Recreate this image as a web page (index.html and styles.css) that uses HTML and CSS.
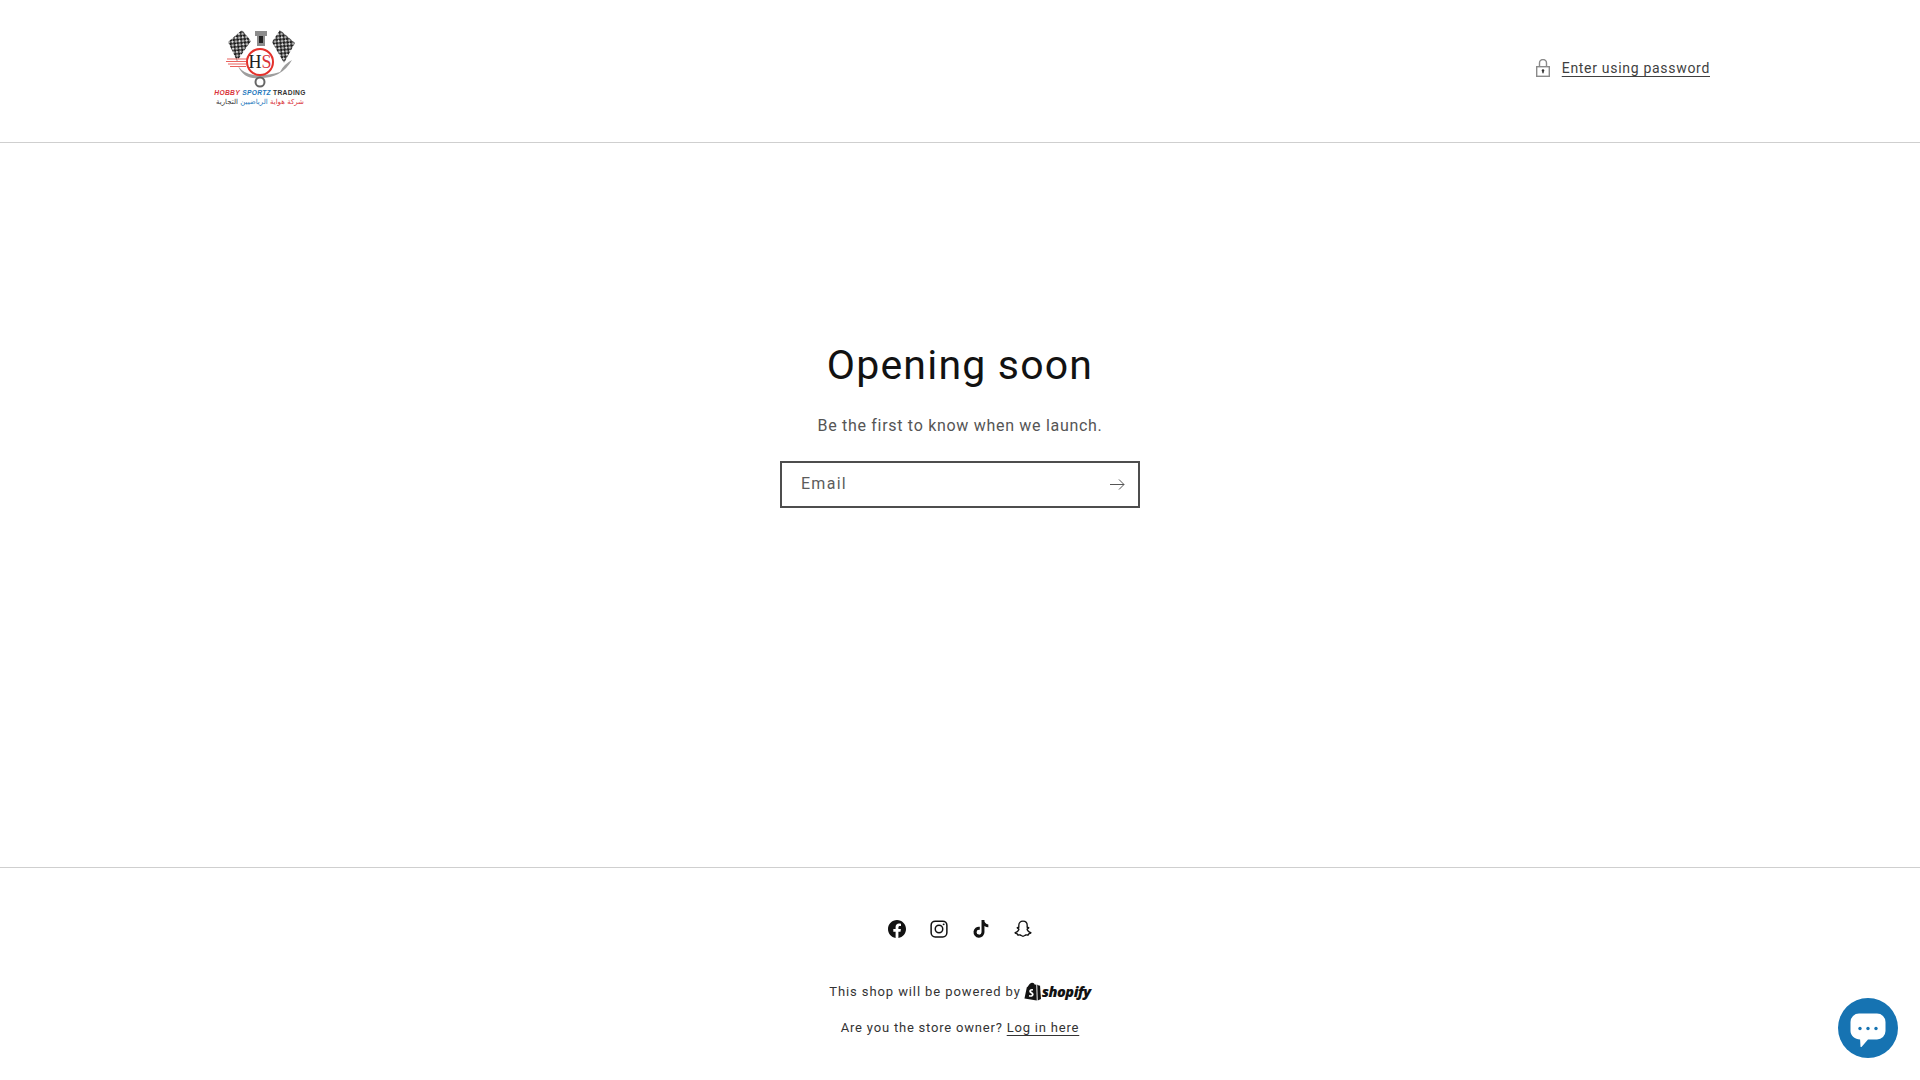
FILE: index.html
```html
<!DOCTYPE html>
<html>
	<head>
		<meta charset="utf-8" />
		<title>Hobby Sportz Trading</title>
		<link rel="stylesheet" href="styles.css">
	</head>
	<body>
		<header class="header">
			<a href="#" class="logo">
				<svg class="logoMark" viewBox="0 0 100 60" width="100" height="60">
					<defs>
						<pattern id="check" width="5" height="5" patternUnits="userSpaceOnUse" patternTransform="rotate(40)">
							<rect width="5" height="5" fill="#1c1c1c"/>
							<rect width="2.200" height="2.200" fill="#ddd"/>
							<rect x="2.500" y="2.500" width="2.200" height="2.200" fill="#ddd"/>
						</pattern>
					</defs>
					<path d="M32 2 L41 13 L27 33 L18 14 Z" fill="url(#check)"/>
					<path d="M70 2 L85 15 L74 35 L62 14 Z" fill="url(#check)"/>
					<path d="M45 3h12v5h-2v10h-8V8h-2z" fill="#8c8c8c"/>
					<rect x="49" y="8" width="4" height="7" fill="#222"/>
					<path d="M28 38 Q34 52 50 50 Q72 50 82 32 Q74 36 70 44 Q56 48 44 47 Q34 46 28 38 Z" fill="#9e9e9e"/>
					<circle cx="50" cy="54" r="4.500" fill="none" stroke="#666" stroke-width="2"/>
					<path d="M17 31h20M16 33.500h20M18 36h18M20 38.500h16" stroke="#e9635e" stroke-width="1"/>
					<circle cx="50" cy="34" r="13" fill="#fff" stroke="#e4312b" stroke-width="2"/>
					<text x="50" y="40" class="logoHs">H<tspan class="logoS">S</tspan></text>
				</svg>
				<span class="logoLine"><b class="logoRed">HOBBY</b> <b class="logoBlue">SPORTZ</b> <b class="logoDark">TRADING</b></span>
				<span class="logoArabic" dir="rtl"><span class="logoRed">شركة هواية</span> <span class="logoBlue">الرياضيين</span> التجارية</span>
			</a>
			<a href="#" class="enter">
				<svg class="lock" viewBox="0 0 14 18" width="14" height="18" fill="none" stroke="#8a8a8a" stroke-width="1.400">
					<rect x="0.700" y="7.700" width="12.600" height="9.600"/>
					<path d="M3.500 7.500V4a3.500 3.500 0 0 1 7 0v3.500"/>
					<circle cx="7" cy="11.500" r="1.300" fill="#333" stroke="none"/>
					<path d="M7 12v2.200" stroke="#333"/>
				</svg>
				<span class="link">Enter using password</span>
			</a>
		</header>
		<main class="main">
			<h1>Opening soon</h1>
			<p class="sub">Be the first to know when we launch.</p>
			<form class="field">
				<span class="placeholder">Email</span>
				<svg viewBox="0 0 15 11" width="15" height="11" fill="none" stroke="#555" stroke-width="1">
					<path d="M0 5.500h14M9 .5l5 5-5 5"/>
				</svg>
			</form>
		</main>
		<footer class="footer">
			<ul class="social">
				<li>
					<svg viewBox="0 0 24 24" width="18" height="18" fill="#121212">
						<path d="M24 12.070C24 5.400 18.630 0 12 0S0 5.400 0 12.070c0 6.030 4.390 11.020 10.130 11.930v-8.440H7.080v-3.490h3.050V9.410c0-3.020 1.790-4.690 4.530-4.690 1.310 0 2.680.24 2.680.24v2.970h-1.510c-1.490 0-1.960.93-1.960 1.880v2.260h3.330l-.53 3.490h-2.800V24C19.610 23.090 24 18.100 24 12.070z"/>
					</svg>
				</li>
				<li>
					<svg viewBox="0 0 24 24" width="18" height="18" fill="none" stroke="#121212" stroke-width="2">
						<rect x="1.500" y="1.500" width="21" height="21" rx="5.500"/>
						<circle cx="12" cy="12" r="5"/>
						<circle cx="18.200" cy="5.800" r="1.300" fill="#121212" stroke="none"/>
					</svg>
				</li>
				<li>
					<svg viewBox="0 0 24 24" width="18" height="18" fill="#121212">
						<path d="M16.600 0h-3.900v16.300a3.300 3.300 0 1 1-3.300-3.400c.3 0 .7 0 1 .1V9a7.300 7.300 0 1 0 6.200 7.300V8.100a9 9 0 0 0 5.200 1.700V5.900A5.200 5.200 0 0 1 16.600 0z"/>
					</svg>
				</li>
				<li>
					<svg viewBox="0 0 24 24" width="18" height="18" fill="none" stroke="#121212" stroke-width="1.800" stroke-linejoin="round">
						<path d="M12 1.500c3.600 0 5.600 2.600 5.600 5.800 0 .9 0 1.700-.1 2.400.8.300 1.900-.3 2.200.5.300.900-1.800 1.300-2.200 1.900-.2.900 2 4.200 5 4.900-.2 1-2.300 1-2.900 1.500-.4.500-.2 1.300-.7 1.500-.9.200-2-.3-3.200 0-1.200.3-2 1.600-3.700 1.600s-2.500-1.300-3.700-1.600c-1.200-.3-2.300.2-3.200 0-.5-.2-.3-1-.7-1.500-.6-.5-2.700-.5-2.900-1.500 3-.7 5.200-4 5-4.900-.4-.6-2.500-1-2.200-1.900.3-.8 1.400-.2 2.200-.5-.1-.7-.1-1.500-.1-2.400 0-3.200 2-5.800 5.600-5.800z"/>
					</svg>
				</li>
			</ul>
			<p class="powered">
				This shop will be powered by
				<span class="shopify">
					<svg viewBox="0 0 18 20" width="17" height="19">
						<path d="M.5 17.500 3 5.500 C5 4.800 5.500 .8 8.500 .7 C10 .6 11 1.500 11.500 2.800 L13 2.500 L13.500 19.500 Z" fill="#121212"/>
						<path d="M14 2.500 L15 3.500 L17 4 L18 18 L14.500 19.500 Z" fill="#121212"/>
						<path d="M9.500 7.500C8 7 5.500 7.500 5.500 9.800c0 2 2.800 2.200 2.800 3.500 0 1-1.600 1-2.800.3l-.4 1.600c2 1 5 .5 5.100-2.200.1-2.200-2.700-2.600-2.700-3.600 0-.6 1-.8 2-.3z" fill="#fff"/>
					</svg>
					<b class="shopifyWord">shopify</b>
				</span>
			</p>
			<p class="owner">Are you the store owner? <a href="#" class="link">Log in here</a></p>
		</footer>
		<div class="chat">
			<svg viewBox="0 0 36 40" width="36" height="40">
				<path d="M9 5.500h18a8.500 8.500 0 0 1 8.500 8.500v9a8.500 8.500 0 0 1-8.500 8.500H18l-6.500 7.500c-.5.300-1 0-1-.5l-.4-7C5 31 .5 28 .5 23v-9A8.500 8.500 0 0 1 9 5.500z" fill="#fff"/>
				<circle cx="10" cy="20.500" r="1.700" fill="#1673b2"/>
				<circle cx="18" cy="20.500" r="1.700" fill="#1673b2"/>
				<circle cx="26" cy="20.500" r="1.700" fill="#1673b2"/>
			</svg>
		</div>
	</body>
</html>
```
FILE: styles.css
```css
*{
	margin: 0;
	padding: 0;
	box-sizing: border-box;
}
html,body{
	height: 100%;
}
body{
	display: flex;
	flex-direction: column;
	height: 1080px;
	overflow: hidden;
	background-color: #fff;
	color: #121212;
	font-family: Roboto, "Noto Sans", sans-serif;
	font-size: 16px;
	letter-spacing: 0.7px;
}
ul li{
	list-style: none;
}
a{
	color: inherit;
	text-decoration: none;
}
.header{
	height: 143px;
	flex: none;
	padding: 0 210px;
	border-bottom: 1px solid #cfcfcf;
	display: flex;
	justify-content: space-between;
	align-items: center;
}
.logo{
	width: 100px;
	margin-top: -7px;
	display: flex;
	flex-direction: column;
	align-items: center;
}
.logoMark{
	display: block;
}
.logoHs{
	font-family: "Liberation Serif", serif;
	font-size: 18px;
	text-anchor: middle;
	fill: #222;
	letter-spacing: 0;
}
.logoS{
	fill: #d9333a;
}
.logoLine{
	font-family: "Liberation Sans", sans-serif;
	font-size: 6.700px;
	font-style: italic;
	letter-spacing: 0.3px;
	line-height: 9px;
	white-space: nowrap;
}
.logoArabic{
	font-family: "DejaVu Sans", sans-serif;
	font-size: 7px;
	letter-spacing: 0;
	line-height: 10px;
	color: #333;
	white-space: nowrap;
}
.logoRed{
	color: #d9333a;
}
.logoBlue{
	color: #2478bd;
}
.logoDark{
	color: #333;
	font-style: normal;
}
.enter{
	display: flex;
	align-items: center;
	gap: 12px;
	margin-top: -7px;
	font-size: 14px;
	color: #3f3f3f;
}
.link{
	text-decoration: underline;
	text-underline-offset: 3px;
}
.main{
	flex: 1;
	display: flex;
	flex-direction: column;
	align-items: center;
	padding-top: 194px;
}
h1{
	font-size: 41px;
	font-weight: 400;
	line-height: 56px;
	letter-spacing: 1.200px;
}
.sub{
	margin-top: 21px;
	line-height: 24px;
	color: #555;
}
.field{
	width: 360px;
	height: 47px;
	margin-top: 23px;
	padding: 0 13px 0 19px;
	border: 2px solid #4d4d4d;
	display: flex;
	justify-content: space-between;
	align-items: center;
}
.placeholder{
	color: #5c5c5c;
	font-size: 16px;
	letter-spacing: 1.280px;
	margin-top: -2px;
}
.footer{
	height: 213px;
	flex: none;
	border-top: 1px solid #cfcfcf;
	display: flex;
	flex-direction: column;
	align-items: center;
}
.social{
	display: flex;
	gap: 24px;
	margin-top: 52px;
	height: 18px;
}
.social li{
	height: 18px;
}
.powered{
	margin-top: 41px;
	font-size: 13px;
	letter-spacing: 0.900px;
	display: flex;
	align-items: center;
	gap: 3px;
	color: #333;
	height: 24px;
}
.shopify{
	display: flex;
	align-items: center;
	gap: 1px;
	color: #121212;
}
.shopifyWord{
	font-family: "Open Sans", sans-serif;
	font-style: italic;
	font-size: 14.500px;
	font-weight: 800;
	letter-spacing: -0.500px;
}
.owner{
	margin-top: 17px;
	font-size: 13px;
	letter-spacing: 0.800px;
	color: #333;
}
.chat{
	position: fixed;
	right: 22px;
	bottom: 22px;
	width: 60px;
	height: 60px;
	border-radius: 50%;
	background-color: #1673b2;
	display: flex;
	justify-content: center;
	align-items: center;
}
```
